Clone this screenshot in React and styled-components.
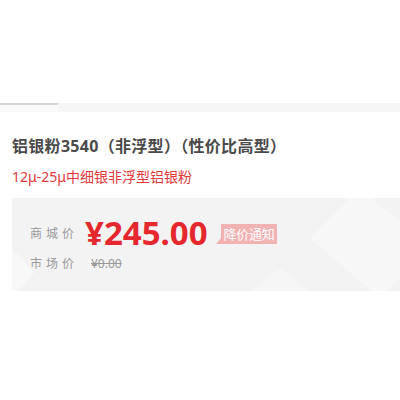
import React from "react"
import styled, { createGlobalStyle } from "styled-components"

const GlobalStyle = createGlobalStyle`
* {
    margin: 0;
    padding: 0;
    box-sizing: border-box;
}

body {
    width: 400px;
    height: 400px;
    overflow: hidden;
    background: #fff;
    font-family: "Microsoft YaHei", "Noto Sans", "Noto Sans CJK SC", sans-serif;
}
`

const Page = styled.div`
padding-top: 103px;
`

const TabStrip = styled.div`
height: 9px;
background: #f6f6f6;
display: flex;
`

const TabActive = styled.div`
width: 58px;
border-top: 2px solid #d6d6d6;
background: #fafafa;
`

const Info = styled.div`
padding: 21px 0 0 12px;
`

const Title = styled.h1`
font-size: 16px;
font-weight: bold;
color: #4a4a4a;
line-height: 26px;
letter-spacing: 0.3px;
`

const Sub = styled.p`
margin-top: 8px;
font-size: 14px;
color: #e4393c;
line-height: 20px;
`

const PriceBox = styled.div`
position: relative;
margin-top: 11px;
width: 388px;
height: 93px;
background: #f3f3f3;
overflow: hidden;
padding: 20px 0 0 18px;
`

const Deco = styled.svg`
position: absolute;
left: 0;
top: 0;
`

const Row = styled.div`
position: relative;
display: flex;
align-items: center;
height: ${(p) => p.h}px;
`

const Label = styled.span`
width: 50px;
font-size: 12px;
color: #999;
letter-spacing: 4px;
`

const Price = styled.span`
font-family: "Noto Sans", "Noto Sans CJK SC", sans-serif;
font-size: 33px;
font-weight: bold;
color: #e5282d;
line-height: 30px;
margin-left: 5px;
`

const Notice = styled.span`
position: relative;
margin-left: 13px;
margin-top: 2px;
padding: 0 3px;
height: 20px;
line-height: 20px;
font-size: 13px;
color: #fff;
background: #f1b2b2;
letter-spacing: -0.3px;

&::before {
    content: "";
    position: absolute;
    left: -5px;
    bottom: 0;
    border-right: 5px solid #f1b2b2;
    border-top: 6px solid transparent;
}
`

const OldPrice = styled.span`
font-family: "Noto Sans", sans-serif;
font-size: 12px;
color: #999;
text-decoration: line-through;
margin-left: 11px;
`

export default function App() {
    return (
        <Page>
            <GlobalStyle />
            <TabStrip>
                <TabActive />
            </TabStrip>
            <Info>
                <Title>铝银粉3540（非浮型）（性价比高型）</Title>
                <Sub>12μ-25μ中细银非浮型铝银粉</Sub>
                <PriceBox>
                    <Deco width="388" height="93" viewBox="0 0 388 93">
                        <polygon points="348,-10 418,50 368,100 298,40" fill="#f7f7f7" />
                        <polygon points="0,50 22,75 0,100" fill="#f8f8f8" />
                        <polygon points="238,93 268,70 298,93" fill="#f6f6f6" />
                    </Deco>
                    <Row h={30}>
                        <Label>商城价</Label>
                        <Price>¥245.00</Price>
                        <Notice>降价通知</Notice>
                    </Row>
                    <Row h={30}>
                        <Label>市场价</Label>
                        <OldPrice>¥0.00</OldPrice>
                    </Row>
                </PriceBox>
            </Info>
        </Page>
    )
}
